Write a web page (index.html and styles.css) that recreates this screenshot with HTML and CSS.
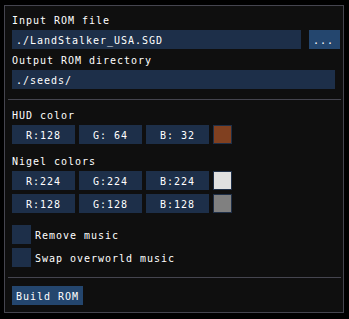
FILE: index.html
```html
<!DOCTYPE html>
<html lang="en">
<head>
  <meta charset="UTF-8">
  <meta name="viewport" content="width=device-width, initial-scale=1.0">
  <title>Randomizer</title>
  <link rel="stylesheet" href="styles.css">
</head>
<body>
  <div class="window">
    <div class="label">Input ROM file</div>
    <div class="row">
      <div class="field path">./LandStalker_USA.SGD</div>
      <div class="button browse">...</div>
    </div>

    <div class="label">Output ROM directory</div>
    <div class="field output">./seeds/</div>

    <div class="separator"></div>

    <div class="label hud">HUD color</div>
    <div class="row">
      <div class="field num">R:128</div>
      <div class="field num">G: 64</div>
      <div class="field num">B: 32</div>
      <div class="swatch" style="background: rgb(128, 64, 32);"></div>
    </div>

    <div class="label nigel">Nigel colors</div>
    <div class="row">
      <div class="field num">R:224</div>
      <div class="field num">G:224</div>
      <div class="field num">B:224</div>
      <div class="swatch" style="background: rgb(224, 224, 224);"></div>
    </div>
    <div class="row">
      <div class="field num">R:128</div>
      <div class="field num">G:128</div>
      <div class="field num">B:128</div>
      <div class="swatch" style="background: rgb(128, 128, 128);"></div>
    </div>

    <div class="row check first">
      <div class="box"></div>
      <div class="check-label">Remove music</div>
    </div>
    <div class="row check">
      <div class="box"></div>
      <div class="check-label">Swap overworld music</div>
    </div>

    <div class="separator second"></div>

    <div class="button build">Build ROM</div>
  </div>
</body>
</html>
```

FILE: styles.css
```css
body {
  margin: 0;
  background: #000;
  color: #fff;
  font-family: "DejaVu Sans Mono", "Liberation Mono", monospace;
  font-size: 10px;
  letter-spacing: 0.98px;
}
.window {
  margin: 5px 0 0 4px;
  width: 340px;
  height: 308px;
  box-sizing: border-box;
  border: 1px solid #45454f;
  background: #0f0f0f;
  padding: 7px;
}
.label {
  height: 13px;
  line-height: 15px;
  white-space: pre;
  margin-top: 4px;
}
.label:first-child {
  margin-top: 0;
}
.label.hud {
  margin-top: 8px;
}
.label.nigel {
  margin-top: 10px;
}
.row {
  display: flex;
  gap: 4px;
  margin-top: 4px;
}
.row > * {
  flex-shrink: 0;
}
.field, .button {
  height: 19px;
  box-sizing: border-box;
  padding: 3px 4px;
  line-height: 15px;
  white-space: pre;
  overflow: hidden;
}
.field {
  background: #1d2f49;
}
.path {
  width: 289px;
}
.output {
  width: 323px;
  margin-top: 4px;
}
.button {
  background: #24466e;
}
.browse {
  width: 31px;
  margin-left: 4px;
}
.num {
  width: 63px;
  text-align: center;
  padding: 3px 0;
}
.swatch {
  width: 19px;
  height: 19px;
  box-sizing: border-box;
  border: 1px solid #1f2f47;
}
.separator {
  height: 1px;
  background: #45454f;
  margin: 10px -5px 0 -4px;
}
.separator.second {
  margin-top: 10px;
}
.check.first {
  margin-top: 12px;
}
.box {
  width: 19px;
  height: 19px;
  background: #1d2f49;
}
.check-label {
  padding-top: 3px;
  height: 13px;
  line-height: 15px;
  white-space: pre;
}
.build {
  display: inline-block;
  width: 71px;
  margin-top: 8px;
}
```
